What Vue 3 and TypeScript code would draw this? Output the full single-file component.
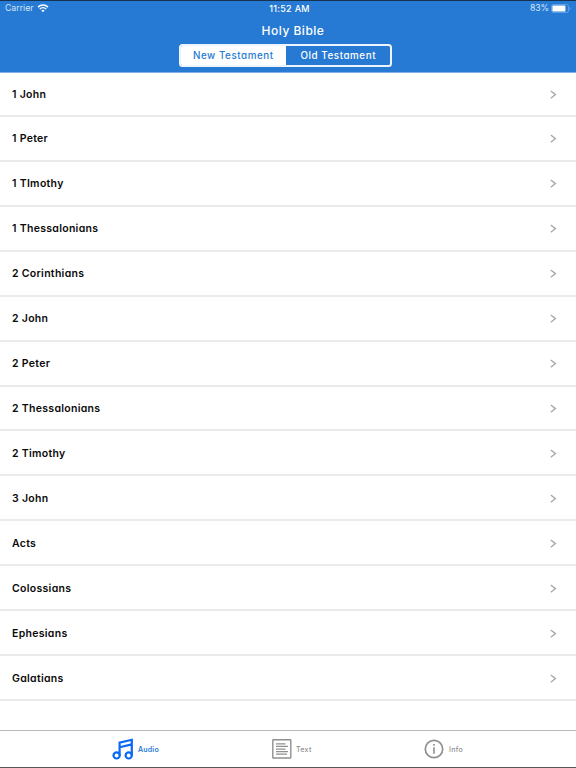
<script setup lang="ts">
import { ref } from 'vue'

type Testament = 'new' | 'old'
type Tab = 'audio' | 'text' | 'info'

const testament = ref<Testament>('new')
const tab = ref<Tab>('audio')

const books: string[] = [
  '1 John', '1 Peter', '1 TImothy', '1 Thessalonians', '2 Corinthians',
  '2 John', '2 Peter', '2 Thessalonians', '2 Timothy', '3 John',
  'Acts', 'Colossians', 'Ephesians', 'Galatians',
]
</script>

<template>
  <div class="screen">
    <header class="header">
      <div class="status">
        <div class="carrier">
          <span>Carrier</span>
          <svg class="wifi" width="12" height="9" viewBox="0 0 11 9">
            <path d="M.5 3.1a7.2 7.2 0 0 1 10 0M2.3 5a4.6 4.6 0 0 1 6.4 0" fill="none" stroke="#fff" stroke-width="1.5" />
            <path d="M3.8 6.5a2.5 2.5 0 0 1 3.4 0L5.5 8.3z" fill="#fff" />
          </svg>
        </div>
        <time class="time">11:52 AM</time>
        <div class="power">
          <span>83%</span>
          <svg width="20" height="9" viewBox="0 0 20 9">
            <rect x=".5" y=".5" width="17" height="8" rx="1.8" fill="none" stroke="#6fa9e6" stroke-width=".8" />
            <rect x="1.4" y="1.5" width="13" height="6" rx=".6" fill="#fff" />
            <path d="M18.6 3v3q1-.4 1-1.5t-1-1.5" fill="#6fa9e6" />
          </svg>
        </div>
      </div>
      <h1 class="title">Holy Bible</h1>
      <div class="segments">
        <button class="segment" :class="{ active: testament === 'new' }" @click="testament = 'new'">New Testament</button>
        <button class="segment old" :class="{ active: testament === 'old' }" @click="testament = 'old'">Old Testament</button>
      </div>
    </header>

    <ul class="books">
      <li v-for="book in books" :key="book" class="book">
        <span class="name">{{ book }}</span>
        <svg class="chevron" width="7" height="9" viewBox="0 0 7 9">
          <path d="M.8 1 5.4 4.6.8 8.2" fill="none" stroke="#aaa" stroke-width="1.4" />
        </svg>
      </li>
    </ul>

    <nav class="tabs">
      <button class="tab audio" :class="{ active: tab === 'audio' }" @click="tab = 'audio'">
        <svg width="22" height="22" viewBox="0 0 22 22" fill="none" stroke="currentColor" stroke-width="2.2">
          <circle cx="4.6" cy="17.4" r="3.1" />
          <circle cx="16.7" cy="17.4" r="3.1" />
          <path d="M7.6 17.4V4.6L19.8 1.8V17.4M7.6 9.2 19.8 6.4" />
        </svg>
        <span>Audio</span>
      </button>
      <button class="tab text" :class="{ active: tab === 'text' }" @click="tab = 'text'">
        <svg width="20" height="20" viewBox="0 0 20 20" fill="none" stroke="currentColor">
          <rect x=".8" y=".8" width="18" height="18.2" rx=".5" stroke-width="1.4" />
          <path d="M4 4.8h9.5M4 7.4h12M4 10h9.5M4 12.6h12M4 15.2h11" stroke-width="1.25" />
        </svg>
        <span>Text</span>
      </button>
      <button class="tab info" :class="{ active: tab === 'info' }" @click="tab = 'info'">
        <svg width="20" height="20" viewBox="0 0 20 20" fill="none" stroke="currentColor">
          <circle cx="10" cy="10" r="8.7" stroke-width="1.7" />
          <path d="M10 8.3v6.4M10 5v1.8" stroke-width="1.6" />
        </svg>
        <span>Info</span>
      </button>
    </nav>
  </div>
</template>

<style>
body {
  margin: 0;
}
</style>

<style scoped>
.screen {
  box-sizing: border-box;
  width: 576px;
  height: 768px;
  display: flex;
  flex-direction: column;
  overflow: hidden;
  background: #fff;
  border-top: 1px solid #15324f;
  border-bottom: 1px solid #555;
  color: #0a0a0a;
  font-family: Inter, "Liberation Sans", sans-serif;
  font-feature-settings: "cv11";
}
button {
  margin: 0;
  padding: 0;
  border: 0;
  background: none;
  font: inherit;
  font-feature-settings: inherit;
  letter-spacing: inherit;
  color: inherit;
}
.header {
  box-sizing: border-box;
  flex: none;
  height: 72px;
  background: #267ad3;
  border-bottom: 1px solid #82b2e7;
  color: #fff;
  display: flex;
  flex-direction: column;
  align-items: center;
}
.status {
  box-sizing: border-box;
  width: 100%;
  height: 15px;
  padding: 0 5px;
  display: grid;
  grid-template-columns: 1fr auto 1fr;
  align-items: center;
  font-size: 8.7px;
  line-height: 15px;
  font-feature-settings: normal;
}
.carrier,
.power {
  display: flex;
  align-items: center;
  gap: 4px;
  color: #d5e6f8;
}
.power {
  justify-content: flex-end;
  gap: 2px;
}
.power span {
  letter-spacing: -0.1px;
}
.time {
  padding-left: 3px;
  font-weight: 500;
  font-size: 9px;
  letter-spacing: 0.3px;
}
.title {
  margin: 7px 0 6px;
  padding-left: 10px;
  font-size: 12px;
  line-height: 15px;
  font-weight: 500;
  letter-spacing: 0.5px;
}
.segments {
  box-sizing: border-box;
  width: 213px;
  height: 23px;
  margin-right: 5px;
  display: grid;
  grid-template-columns: 1fr 1fr;
  border: 2px solid #edf4fc;
  border-radius: 3.5px;
  overflow: hidden;
  font-size: 9.8px;
  font-weight: 500;
  letter-spacing: 0.56px;
}
.segment {
  padding-bottom: 1px;
}
.segment.old {
  padding-left: 1px;
}
.segment.active {
  background: #fff;
  color: #267ad3;
}
.books {
  flex: 1;
  margin: 0;
  padding: 0;
  list-style: none;
}
.book {
  box-sizing: border-box;
  height: 44.93px;
  padding: 1px 19px 0 12px;
  border-bottom: 2px solid #ebebeb;
  display: flex;
  align-items: center;
  justify-content: space-between;
}
.book:first-child {
  height: 44px;
  padding-top: 0;
}
.name {
  font-size: 10.5px;
  font-weight: 600;
  letter-spacing: 0.3px;
}
.tabs {
  box-sizing: border-box;
  flex: none;
  height: 37px;
  border-top: 1px solid #bbb;
  display: flex;
  align-items: center;
  color: #909090;
  font-size: 7px;
  font-weight: 500;
  letter-spacing: 0.3px;
}
.tab {
  display: flex;
  align-items: center;
  gap: 4px;
}
.tab.audio {
  box-sizing: border-box;
  width: 160px;
  padding-left: 112px;
  font-weight: 600;
  letter-spacing: 0.2px;
}
.tab.text {
  width: 152px;
  margin-left: 112px;
}
.tab.info {
  gap: 5px;
}
.tab.active {
  color: #0b68f5;
}
.tab.active span {
  color: #267ad3;
}
</style>
